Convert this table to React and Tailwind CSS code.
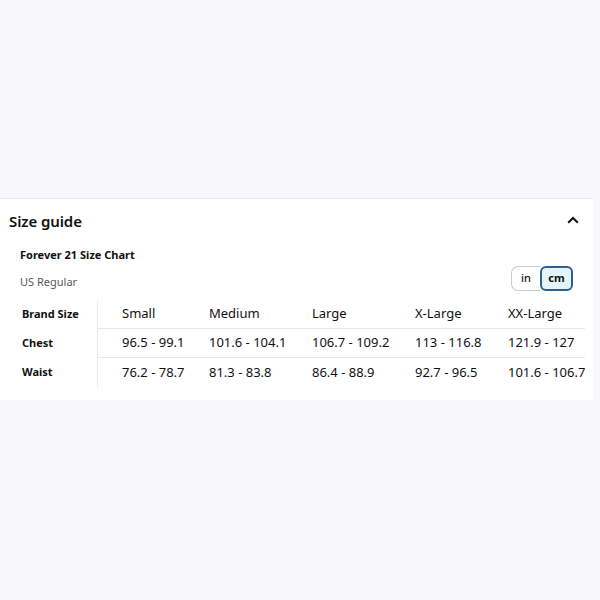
import React from "react";

const cols = [
  { w: "w-[87px]", label: "Small", chest: "96.5 - 99.1", waist: "76.2 - 78.7" },
  { w: "w-[103px]", label: "Medium", chest: "101.6 - 104.1", waist: "81.3 - 83.8" },
  { w: "w-[103px]", label: "Large", chest: "106.7 - 109.2", waist: "86.4 - 88.9" },
  { w: "w-[93px]", label: "X-Large", chest: "113 - 116.8", waist: "92.7 - 96.5" },
  { w: "w-[76px]", label: "XX-Large", chest: "121.9 - 127", waist: "101.6 - 106.7" },
];

export default function App() {
  return (
    <div className="w-[600px] h-[600px] bg-[#f8f8fb] flex flex-col text-[#0f1111]" style={{ fontFamily: '"Noto Sans", "Open Sans", sans-serif' }}>
      <div className="h-[198px]" />
      <div className="w-[593px] h-[202px] bg-white border-t border-[#e9eaec] flex flex-col">
        <div className="flex items-center justify-between pl-[9px] pr-[14px] h-[44px]">
          <span className="text-[15px] font-semibold tracking-[-0.1px]">Size guide</span>
          <svg width="12" height="8" viewBox="0 0 12 8" fill="none" className="mt-[-3px]">
            <path d="M1.2 6.8 L6 2 L10.8 6.8" stroke="#0f1111" strokeWidth="2" />
          </svg>
        </div>
        <div className="pl-[20px] text-[11px] font-bold leading-[14px] mt-[5px]">Forever 21 Size Chart</div>
        <div className="flex items-center justify-between pl-[20px] pr-[20px] mt-[4px]">
          <span className="text-[11px] text-[#565959] mt-[7px]">US Regular</span>
          <div className="flex h-[25px] text-[11px] font-semibold">
            <div className="w-[29px] flex items-center justify-center border border-[#c7c9cc] border-r-0 rounded-l-[7px] text-[#0f1111] font-medium">in</div>
            <div className="w-[33px] flex items-center justify-center border-2 border-[#2e5f8e] rounded-[6px] bg-[#e5f4fb] font-bold">cm</div>
          </div>
        </div>
        <div className="flex mt-[9px]">
          <div className="w-[97px] flex flex-col text-[11px] font-bold">
            <div className="h-[29px] flex items-center pl-[22px]">Brand Size</div>
            <div className="h-[29px] flex items-center pl-[22px]">Chest</div>
            <div className="h-[29px] flex items-center pl-[22px]">Waist</div>
          </div>
          <div className="border-l border-[#eaebed] flex flex-col text-[13px] pb-[1px]">
            <div className="flex h-[29px] items-center border-b border-[#e7e8ea] pl-[24px] w-[487px]">
              {cols.map((c) => (
                <div key={c.label} className={`${c.w} shrink-0 whitespace-nowrap`}>{c.label}</div>
              ))}
            </div>
            <div className="flex h-[29px] items-center border-b border-[#e7e8ea] pl-[24px] w-[487px]">
              {cols.map((c) => (
                <div key={c.label} className={`${c.w} shrink-0 whitespace-nowrap`}>{c.chest}</div>
              ))}
            </div>
            <div className="flex h-[29px] items-center pl-[24px] w-[487px]">
              {cols.map((c) => (
                <div key={c.label} className={`${c.w} shrink-0 whitespace-nowrap`}>{c.waist}</div>
              ))}
            </div>
          </div>
        </div>
      </div>
    </div>
  );
}
